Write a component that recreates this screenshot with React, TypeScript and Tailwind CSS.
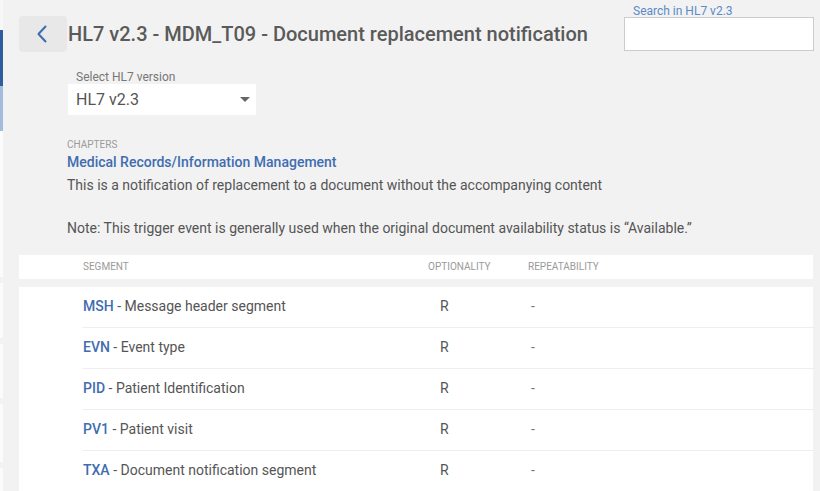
import React from 'react';

const segments = [
  { code: 'MSH', name: 'Message header segment', opt: 'R', rep: '-' },
  { code: 'EVN', name: 'Event type', opt: 'R', rep: '-' },
  { code: 'PID', name: 'Patient Identification', opt: 'R', rep: '-' },
  { code: 'PV1', name: 'Patient visit', opt: 'R', rep: '-' },
  { code: 'TXA', name: 'Document notification segment', opt: 'R', rep: '-' },
];

const SideSliver = () => (
  <div className="w-[3px] shrink-0 flex flex-col bg-[#f2f2f2]">
    <div className="h-[30px] bg-[#f7f7f7]" />
    <div className="h-[56px] bg-[#2f5e9f]" />
    <div className="h-[45px] bg-[#a2bcdb]" />
    <div className="h-[146px] bg-[#fbfbfb]" />
    <div className="h-[6px]" />
    <div className="h-[55px] bg-[#fbfbfb]" />
    <div className="h-[6px]" />
    <div className="h-[54px] bg-[#fbfbfb]" />
    <div className="h-[6px]" />
    <div className="h-[58px] bg-[#fbfbfb]" />
    <div className="h-[6px]" />
    <div className="flex-1 bg-[#fbfbfb]" />
  </div>
);

export default function App() {
  return (
    <div
      className="w-[820px] h-[491px] overflow-hidden flex bg-[#f2f2f2] text-[#555]"
      style={{ fontFamily: 'Roboto, "Liberation Sans", sans-serif' }}
    >
      <SideSliver />

      <div className="flex-1 pl-[16px] pr-[7px] pt-[5px]">
        {/* Header */}
        <div className="flex justify-between items-start">
          <div className="flex items-center mt-[11px]">
            <button className="w-[48px] h-[36px] rounded-[4px] bg-[#e8e8e8] flex items-center justify-center">
              <svg width="20" height="20" viewBox="0 0 20 20" fill="none">
                <path d="M12.5 2.5 L5.5 10 L12.5 17.5" stroke="#3d6db1" strokeWidth="2" strokeLinecap="round" strokeLinejoin="round" />
              </svg>
            </button>
            <h1 className="ml-[1px] text-[20px] font-medium text-[#5a5a5a]">
              HL7 v2.3 - MDM_T09 - Document replacement notification
            </h1>
          </div>
          <div className="flex flex-col mr-[-1px]">
            <label className="pl-[9px] text-[12px] leading-[12px] text-[#5b8ac6]">Search in HL7 v2.3</label>
            <input className="w-[190px] h-[34px] bg-white border border-[#cccccc] outline-none" />
          </div>
        </div>

        {/* Version select */}
        <div className="ml-[49px] mt-[19px] w-[188px]">
          <div className="pl-[8px] text-[12px] leading-[13px] text-[#777]">Select HL7 version</div>
          <div className="h-[31px] bg-white flex items-center justify-between pl-[8px] pr-[6px]">
            <span className="text-[16px] text-[#555]">HL7 v2.3</span>
            <svg width="10" height="5" viewBox="0 0 10 5">
              <path d="M0 0 L10 0 L5 5 Z" fill="#666" />
            </svg>
          </div>
        </div>

        {/* Chapter info */}
        <div className="ml-[48px] mt-[24px]">
          <div className="text-[10px] leading-[12px] uppercase text-[#9a9a9a]">Chapters</div>
          <div className="mt-[2px] text-[14px] leading-[18px] font-medium text-[#3f6db0]">
            Medical Records/Information Management
          </div>
          <div className="mt-[4px] text-[14px] leading-[21.5px] text-[#555]">
            <p>This is a notification of replacement to a document without the accompanying content</p>
            <p className="h-[21.5px]" />
            <p>Note: This trigger event is generally used when the original document availability status is “Available.”</p>
          </div>
        </div>

        {/* Table header */}
        <div className="mt-[15px] h-[24px] bg-white grid grid-cols-[409px_100px_1fr] items-center text-[10px] uppercase text-[#9a9a9a]">
          <div className="pl-[64px]">Segment</div>
          <div>Optionality</div>
          <div>Repeatability</div>
        </div>

        {/* Table rows */}
        <div className="mt-[8px] bg-white">
          {segments.map((s) => (
            <div
              key={s.code}
              className="ml-[64px] h-[41px] border-b border-[#eeeeee] grid grid-cols-[345px_103px_1fr] items-center text-[14px]"
            >
              <div>
                <span className="font-medium text-[#3f6db0]">{s.code}</span>
                <span className="text-[#555]"> - {s.name}</span>
              </div>
              <div className="pl-[12px] text-[#555]">{s.opt}</div>
              <div className="text-[#777]">{s.rep}</div>
            </div>
          ))}
        </div>
      </div>
    </div>
  );
}
